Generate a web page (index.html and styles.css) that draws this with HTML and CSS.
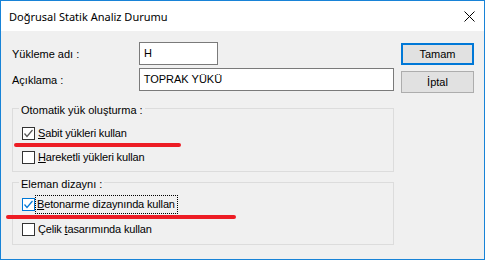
FILE: index.html
```html
<!DOCTYPE html>
<html lang="tr">
<head>
  <meta charset="UTF-8">
  <title>Doğrusal Statik Analiz Durumu</title>
  <link rel="stylesheet" href="styles.css">
</head>
<body>
<div class="window">
  <div class="titlebar">
    <span class="title">Doğrusal Statik Analiz Durumu</span>
    <span class="close">
      <svg width="11" height="11" viewBox="0 0 11 11"><path d="M0.5 0.5 L10.5 10.5 M10.5 0.5 L0.5 10.5" stroke="#000" stroke-width="1" fill="none"/></svg>
    </span>
  </div>

  <div class="content">
    <div class="main">
      <div class="field">
        <label class="field-label">Yükleme adı :</label>
        <div class="input input-short">H</div>
      </div>
      <div class="field">
        <label class="field-label">Açıklama :</label>
        <div class="input input-long">TOPRAK YÜKÜ</div>
      </div>

      <fieldset class="group group-load">
        <legend>Otomatik yük oluşturma :</legend>
        <div class="check-row">
          <span class="box checked">
            <svg width="11" height="11" viewBox="0 0 11 11"><path d="M1.5 5.5 L4 8.5 L9.5 2" stroke="#555" stroke-width="1.2" fill="none"/></svg>
          </span>
          <span class="check-text"><u>S</u>abit yükleri kullan</span>
        </div>
        <div class="check-row">
          <span class="box"></span>
          <span class="check-text"><u>H</u>areketli yükleri kullan</span>
        </div>
      </fieldset>

      <fieldset class="group group-design">
        <legend>Eleman dizaynı :</legend>
        <div class="check-row">
          <span class="box checked focus">
            <svg width="11" height="11" viewBox="0 0 11 11"><path d="M1.5 5.5 L4 8.5 L9.5 2" stroke="#0078d7" stroke-width="1.2" fill="none"/></svg>
          </span>
          <span class="check-text focused"><u>B</u>etonarme dizaynında kullan</span>
        </div>
        <div class="check-row">
          <span class="box"></span>
          <span class="check-text">Çelik <u>t</u>asarımında kullan</span>
        </div>
      </fieldset>
    </div>

    <div class="buttons">
      <button class="btn btn-default">Tamam</button>
      <button class="btn">İptal</button>
    </div>

    <!-- kırmızı işaretler -->
    <div class="mark mark-1"></div>
    <div class="mark mark-2"></div>
  </div>
</div>
</body>
</html>
```

FILE: styles.css
```css
body {
  margin: 0;
  font-family: "Liberation Sans", Arial, sans-serif;
  font-size: 11px;
  color: #000;
  background: #fff;
}

.window {
  width: 485px;
  height: 260px;
  box-sizing: border-box;
  border: 1px solid #1883d7;
  display: flex;
  flex-direction: column;
}

.titlebar {
  height: 30px;
  background: #fff;
  display: flex;
  align-items: center;
  justify-content: space-between;
  padding: 0 8px 0 8px;
}

.title {
  font-family: "Noto Sans", "Open Sans", sans-serif;
  font-size: 11px;
}

.close {
  display: flex;
  margin-right: 1px;
  margin-top: 1px;
}

.content {
  flex: 1;
  background: #f0f0f0;
  position: relative;
  display: flex;
  padding: 11px 11px 0 11px;
}

.main {
  width: 382px;
}

.field {
  display: flex;
  align-items: center;
  height: 23px;
  margin-bottom: 3px;
}

.field-label {
  width: 127px;
}

.input {
  height: 23px;
  box-sizing: border-box;
  border: 1px solid #7a7a7a;
  background: #fff;
  line-height: 21px;
  padding-left: 4px;
}

.input-short {
  width: 79px;
}

.input-long {
  width: 256px;
}

.group {
  margin: 0;
  border: 1px solid #dcdcdc;
  padding: 0 9px;
}

.group legend {
  margin-left: -3px;
  padding: 4px 2px 0 2px;
  line-height: 16px;
}

.group-load {
  margin-top: 7px;
  padding-top: 7px;
  padding-bottom: 5px;
}

.group-design {
  margin-top: 0;
  padding-top: 4px;
  padding-bottom: 6px;
}

.check-row {
  display: flex;
  align-items: center;
  height: 17px;
  margin-bottom: 7px;
}

.group-design .check-row {
  margin-bottom: 8px;
}

.check-row:last-child {
  margin-bottom: 0;
}

.box {
  width: 13px;
  height: 13px;
  box-sizing: border-box;
  border: 1px solid #333;
  background: #fff;
  display: flex;
  align-items: center;
  justify-content: center;
}

.box.focus {
  border-color: #0078d7;
}

.check-text {
  margin-left: 3px;
  line-height: 15px;
  letter-spacing: -0.15px;
}

.check-text.focused {
  margin-left: 1px;
  padding: 0 1px;
  outline: 1px dotted #000;
  outline-offset: 0;
  border: 1px solid transparent;
  border-left: 0;
}

.buttons {
  display: flex;
  flex-direction: column;
  gap: 6px;
  margin-left: 7px;
  padding-top: 1px;
}

.btn {
  width: 73px;
  height: 22px;
  box-sizing: border-box;
  font-family: inherit;
  font-size: 11px;
  background: #e1e1e1;
  border: 1px solid #adadad;
  padding: 0;
  color: #000;
}

.btn-default {
  border: 2px solid #0078d7;
}

.mark {
  position: absolute;
  height: 4px;
  background: #ed1c24;
  border-radius: 2px;
}

.mark-1 {
  left: 13px;
  top: 112px;
  width: 167px;
}

.mark-2 {
  left: 5px;
  top: 184px;
  width: 230px;
}
```
